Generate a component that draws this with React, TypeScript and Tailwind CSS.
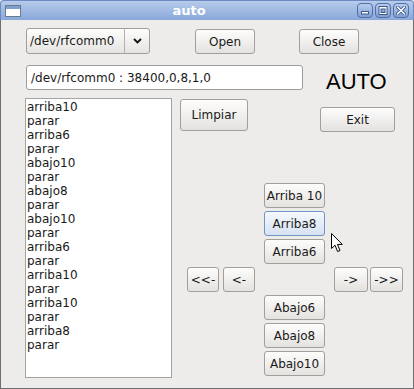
import React from "react";

const font = { fontFamily: '"DejaVu Sans", sans-serif' };

const btn =
  "flex items-center justify-center rounded-[3px] border border-[#a29f9a] bg-gradient-to-b from-[#fdfdfc] to-[#e4e2df] text-[12px] text-[#1a1a1a] leading-none shrink-0";
const btnHover =
  "flex items-center justify-center rounded-[3px] border border-[#7193c8] bg-gradient-to-b from-[#f6f9fd] to-[#d6e1f1] text-[12px] text-[#1a1a1a] leading-none shrink-0";

const log = [
  "arriba10", "parar", "arriba6", "parar", "abajo10", "parar", "abajo8", "parar",
  "abajo10", "parar", "arriba6", "parar", "arriba10", "parar", "arriba10", "parar",
  "arriba8", "parar",
];

function TitleButton({ kind }: { kind: "min" | "max" | "close" }) {
  return (
    <div className="w-[16px] h-[15px] rounded-[4px] border border-[#4f6fa6] bg-gradient-to-b from-[#b9cdeb] to-[#7f9fd3] flex items-center justify-center">
      <svg width="10" height="9" viewBox="0 0 10 9">
        {kind === "min" && (
          <rect x="1.5" y="5.5" width="7" height="2.5" fill="#fff" stroke="#3d5a8c" strokeWidth="1" />
        )}
        {kind === "max" && (
          <>
            <rect x="1" y="0.5" width="8" height="8" fill="#fff" stroke="#3d5a8c" strokeWidth="1" />
            <rect x="3" y="3" width="4" height="3.5" fill="#8fa9d6" stroke="#3d5a8c" strokeWidth="1" />
          </>
        )}
        {kind === "close" && (
          <>
            <path d="M1.5 1 L8.5 8 M8.5 1 L1.5 8" stroke="#3d5a8c" strokeWidth="3.2" strokeLinecap="round" />
            <path d="M1.5 1 L8.5 8 M8.5 1 L1.5 8" stroke="#fff" strokeWidth="1.6" strokeLinecap="round" />
          </>
        )}
      </svg>
    </div>
  );
}

function Cursor() {
  return (
    <svg className="absolute left-[331px] top-[233px]" width="13" height="20" viewBox="0 0 13 20">
      <path
        d="M0.5 0.5 L0.5 15.5 L4 12.2 L6.6 18.5 L9 17.5 L6.4 11.4 L11.3 11.4 Z"
        fill="#fff"
        stroke="#000"
        strokeWidth="1"
        strokeLinejoin="round"
      />
    </svg>
  );
}

export default function App() {
  return (
    <div className="relative w-[414px] h-[389px] flex flex-col bg-[#edeceb]" style={font}>
      {/* barra de título */}
      <div className="h-[20px] flex items-center border border-b-0 border-[#6b8bc2] rounded-t-[4px] bg-gradient-to-b from-[#b7cbea] to-[#89a8da] px-[4px]">
        <div className="w-[16px] h-[12px] border border-[#6a7a90] bg-white flex flex-col">
          <div className="h-[3px] bg-[#7da0cf]" />
        </div>
        <div className="flex-1 text-center text-white font-bold text-[13px] leading-none">auto</div>
        <div className="flex gap-[2px]">
          <TitleButton kind="min" />
          <TitleButton kind="max" />
          <TitleButton kind="close" />
        </div>
      </div>

      {/* cuerpo */}
      <div className="flex-1 flex flex-col border-x border-b border-[#6e6e6e]">
        {/* fila 1 */}
        <div className="flex items-start mt-[8px]">
          <div className="ml-[25px] w-[124px] h-[26px] flex rounded-[3px] border border-[#a29f9a] bg-gradient-to-b from-[#fdfdfc] to-[#e6e4e1]">
            <div className="flex-1 flex items-center pl-[3px] text-[12px] text-[#1a1a1a] border-r border-[#b3b1ad]">
              /dev/rfcomm0
            </div>
            <div className="w-[24px] flex items-center justify-center">
              <svg width="9" height="6" viewBox="0 0 9 6">
                <path d="M1 1 L4.5 4.5 L8 1" fill="none" stroke="#111" strokeWidth="1.8" />
              </svg>
            </div>
          </div>
          <div className={`${btn} ml-[45px] mt-px w-[60px] h-[25px]`}>Open</div>
          <div className={`${btn} ml-[44px] mt-px w-[60px] h-[25px]`}>Close</div>
        </div>

        {/* fila 2 */}
        <div className="flex items-start mt-[11px]">
          <div className="ml-[25px] w-[277px] h-[25px] flex items-center pl-[4px] rounded-[3px] border border-[#9f9d99] bg-white text-[12px] text-[#1a1a1a]">
            /dev/rfcomm0 : 38400,0,8,1,0
          </div>
          <div
            className="ml-[23px] mt-[6px] text-[22px] leading-none text-black"
            style={{ fontFamily: '"Liberation Sans", Arial, sans-serif' }}
          >
            AUTO
          </div>
        </div>

        {/* zona principal */}
        <div className="flex items-start mt-[5px]">
          <div className="ml-[24px] w-[147px] h-[280px] border border-[#a3a3a3] bg-white pt-[1px] text-[12px] leading-[14px] text-[#1a1a1a] overflow-hidden">
            {log.map((l, i) => (
              <div key={i} className="pl-[1px]">
                {l}
              </div>
            ))}
          </div>

          <div className="flex flex-col">
            <div className="flex items-start">
              <div className={`${btn} ml-[8px] mt-px w-[68px] h-[32px]`}>Limpiar</div>
              <div className={`${btn} ml-[72px] mt-[9px] w-[75px] h-[25px]`}>Exit</div>
            </div>

            {/* mandos */}
            <div className="flex flex-col mt-[51px] gap-[3px]">
              <div className={`${btn} ml-[92px] w-[61px] h-[25px]`}>Arriba 10</div>
              <div className={`${btnHover} ml-[92px] w-[61px] h-[25px]`}>Arriba8</div>
              <div className={`${btn} ml-[92px] w-[61px] h-[25px]`}>Arriba6</div>
              <div className="flex">
                <div className={`${btn} ml-[15px] w-[32px] h-[25px]`}>&lt;&lt;-</div>
                <div className={`${btn} ml-[4px] w-[32px] h-[25px]`}>&lt;-</div>
                <div className={`${btn} ml-[79px] w-[34px] h-[25px]`}>-&gt;</div>
                <div className={`${btn} ml-[2px] w-[33px] h-[25px]`}>-&gt;&gt;</div>
              </div>
              <div className={`${btn} ml-[92px] w-[61px] h-[25px]`}>Abajo6</div>
              <div className={`${btn} ml-[92px] w-[61px] h-[25px]`}>Abajo8</div>
              <div className={`${btn} ml-[92px] w-[61px] h-[25px]`}>Abajo10</div>
            </div>
          </div>
        </div>
      </div>

      <Cursor />
    </div>
  );
}
